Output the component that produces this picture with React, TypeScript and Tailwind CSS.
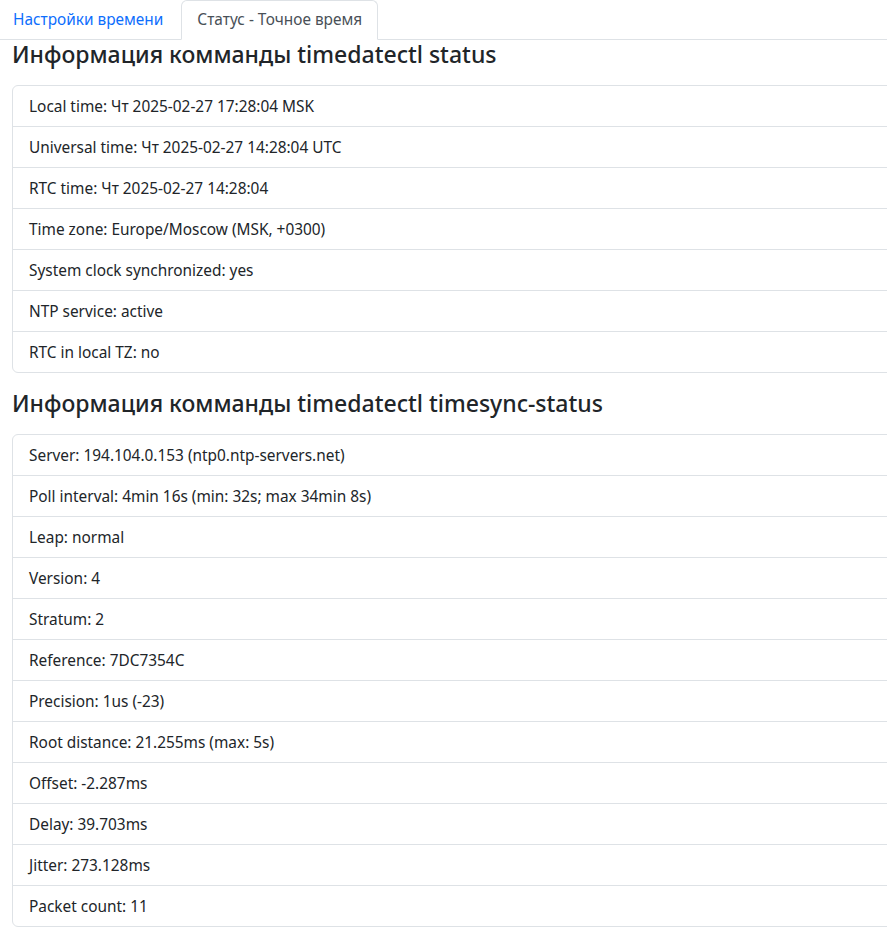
const statusRows = [
  'Local time: Чт 2025-02-27 17:28:04 MSK',
  'Universal time: Чт 2025-02-27 14:28:04 UTC',
  'RTC time: Чт 2025-02-27 14:28:04',
  'Time zone: Europe/Moscow (MSK, +0300)',
  'System clock synchronized: yes',
  'NTP service: active',
  'RTC in local TZ: no',
];

const syncRows = [
  'Server: 194.104.0.153 (ntp0.ntp-servers.net)',
  'Poll interval: 4min 16s (min: 32s; max 34min 8s)',
  'Leap: normal',
  'Version: 4',
  'Stratum: 2',
  'Reference: 7DC7354C',
  'Precision: 1us (-23)',
  'Root distance: 21.255ms (max: 5s)',
  'Offset: -2.287ms',
  'Delay: 39.703ms',
  'Jitter: 273.128ms',
  'Packet count: 11',
];

function InfoList({ rows }: { rows: string[] }) {
  return (
    <ul className="mb-4 mr-[-20px] flex flex-col rounded-md border border-[#dee2e6]">
      {rows.map((row, i) => (
        <li
          key={row}
          className={`px-4 pt-[9px] pb-[7px] leading-6 ${i > 0 ? 'border-t border-[#dee2e6]' : ''}`}
        >
          {row}
        </li>
      ))}
    </ul>
  );
}

export default function App() {
  return (
    <div className="min-h-screen overflow-hidden bg-white font-['Noto_Sans',sans-serif] text-[15.4px] text-[#212529]">
      <nav className="flex border-b border-[#dee2e6]">
        <a className="flex h-[39px] items-center pl-[13px] pr-4 text-[#0d6efd]">Настройки времени</a>
        <a className="-mb-px ml-[2px] flex h-[40px] items-center rounded-t-md border border-[#dee2e6] border-b-white bg-white px-[15px] text-[#495057]">
          Статус - Точное время
        </a>
      </nav>
      <div className="pl-3">
        <h4 className="mb-4 text-[23px] leading-[29px] font-medium">Информация комманды timedatectl status</h4>
        <InfoList rows={statusRows} />
        <h4 className="mb-4 text-[23px] leading-[29px] font-medium">Информация комманды timedatectl timesync-status</h4>
        <InfoList rows={syncRows} />
      </div>
    </div>
  );
}
